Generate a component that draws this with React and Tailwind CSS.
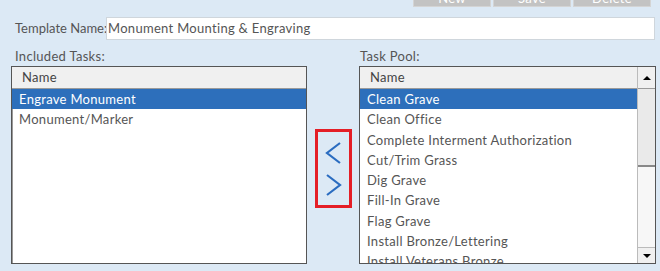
import React from 'react';

const includedTasks = ['Engrave Monument', 'Monument/Marker'];

const poolTasks = [
  'Clean Grave',
  'Clean Office',
  'Complete Interment Authorization',
  'Cut/Trim Grass',
  'Dig Grave',
  'Fill-In Grave',
  'Flag Grave',
  'Install Bronze/Lettering',
  'Install Veterans Bronze',
];

function TaskList({ tasks, selected }) {
  return (
    <div>
      {tasks.map((task, i) => (
        <div
          key={task}
          className={`h-[20.3px] leading-[20px] pl-[7px] whitespace-nowrap ${
            i === selected ? 'bg-[#2d6fbb] text-white' : 'text-[#555]'
          }`}
        >
          {task}
        </div>
      ))}
    </div>
  );
}

function ListHeader() {
  return (
    <div className="h-[22px] bg-[#f0f0f0] border-b border-[#9a9a9a] pl-[10px] leading-[21px] text-[#444]">
      Name
    </div>
  );
}

export default function App() {
  return (
    <div
      className="w-[660px] h-[271px] bg-[#dce9f5] overflow-hidden text-[13px] tracking-[0.3px]"
      style={{ fontFamily: '"Lato", "Noto Sans", sans-serif' }}
    >
      {/* action buttons, mostly scrolled off the top */}
      <div className="flex justify-end gap-[2px] pr-[9px] mt-[-18px]">
        {['New', 'Save', 'Delete'].map((b) => (
          <button
            key={b}
            className="w-[78px] h-[25px] bg-[#c3c3c3] border border-[#d4d4d4] text-white text-[13px] leading-[31px] overflow-hidden"
          >
            {b}
          </button>
        ))}
      </div>

      <div className="flex items-center mt-[10px] pl-[15px] pr-[5px]">
        <span className="text-[#555] w-[91px] whitespace-nowrap tracking-normal">Template Name:</span>
        <div className="flex-1 h-[23px] bg-white border border-[#cfd6dc] pl-[1px] leading-[21px] text-[#555]">
          Monument Mounting &amp; Engraving
        </div>
      </div>

      <div className="flex mt-[8px] text-[#555] h-[17px] leading-[17px]">
        <span className="pl-[15px] w-[360px]">Included Tasks:</span>
        <span>Task Pool:</span>
      </div>

      <div className="flex mt-[1px] pl-[11px]">
        <div className="w-[296px] h-[198px] bg-white border border-[#555] shadow-[inset_1px_1px_0_#999]">
          <ListHeader />
          <TaskList tasks={includedTasks} selected={0} />
        </div>

        <div className="w-[52px] flex justify-center pt-[63px]">
          <div className="w-[37px] h-[79px] border-[3px] border-[#e41e26] flex flex-col items-center justify-center gap-[8px]">
            <svg width="17" height="24" viewBox="0 0 17 24" fill="none">
              <path d="M15 2 L2 12 L15 22" stroke="#2a6cc0" strokeWidth="2.2" />
            </svg>
            <svg width="17" height="24" viewBox="0 0 17 24" fill="none">
              <path d="M2 2 L15 12 L2 22" stroke="#2a6cc0" strokeWidth="2.2" />
            </svg>
          </div>
        </div>

        <div className="w-[297px] h-[198px] bg-white border border-[#555] flex overflow-hidden">
          <div className="flex-1 overflow-hidden">
            <ListHeader />
            <TaskList tasks={poolTasks} selected={0} />
          </div>
          <div className="w-[18px] flex flex-col border-l border-[#bbb] bg-[#f4f4f4]">
            <div className="h-[22px] bg-[#f0f0f0] border-b border-[#9a9a9a] flex items-center justify-center">
              <span className="w-0 h-0 border-l-[4px] border-r-[4px] border-b-[4px] border-l-transparent border-r-transparent border-b-black" />
            </div>
            <div className="h-[78px] bg-[#eaeaea] border-b-2 border-[#888]" />
            <div className="flex-1 bg-[#f7f7f7]" />
            <div className="h-[16px] bg-[#f0f0f0] border-t border-[#bbb] flex items-center justify-center">
              <span className="w-0 h-0 border-l-[4px] border-r-[4px] border-t-[4px] border-l-transparent border-r-transparent border-t-black" />
            </div>
          </div>
        </div>
      </div>
    </div>
  );
}
